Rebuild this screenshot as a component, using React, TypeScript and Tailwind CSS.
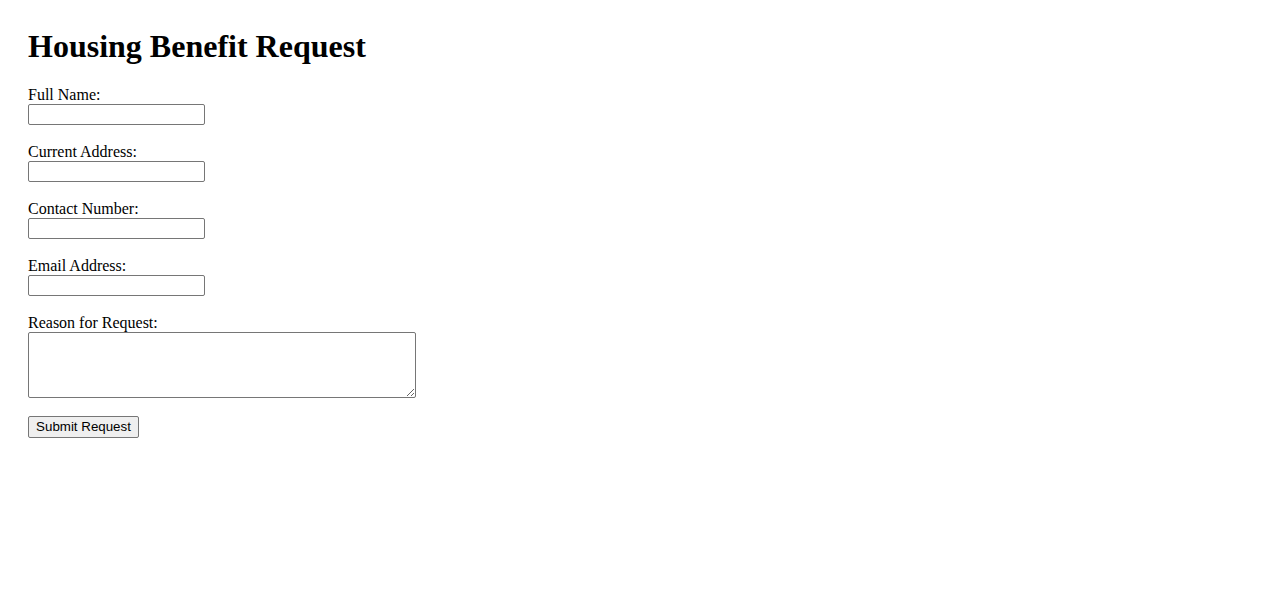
import { useState } from 'react';

const fields = [
  { id: 'fullName', label: 'Full Name:', type: 'text' },
  { id: 'address', label: 'Current Address:', type: 'text' },
  { id: 'phone', label: 'Contact Number:', type: 'tel' },
  { id: 'email', label: 'Email Address:', type: 'email' },
];

function App() {
  const [values, setValues] = useState<Record<string, string>>({});

  return (
    <div className="min-h-screen bg-white pl-[28px] pt-[28px] text-black font-['Liberation_Serif',serif]">
      <h1 className="text-[32px] font-bold leading-[37px] mb-[20px]">Housing Benefit Request</h1>
      <form className="flex flex-col items-start" onSubmit={(e) => e.preventDefault()}>
        {fields.map((f) => (
          <div key={f.id} className="flex flex-col items-start mb-[17px]">
            <label htmlFor={f.id} className="text-[16px] leading-[19px] h-[19px]">
              {f.label}
            </label>
            <input
              id={f.id}
              type={f.type}
              value={values[f.id] ?? ''}
              onChange={(e) => setValues({ ...values, [f.id]: e.target.value })}
              className="w-[177px] h-[21px] border border-[#767676] rounded-[2px] px-[2px] text-[13.33px] font-['Liberation_Sans',sans-serif] bg-white"
            />
          </div>
        ))}
        <div className="flex flex-col items-start mb-[18px]">
          <label htmlFor="reason" className="text-[16px] leading-[19px] h-[19px]">
            Reason for Request:
          </label>
          <textarea
            id="reason"
            className="block w-[388px] h-[66px] border border-[#767676] rounded-[2px] px-[2px] text-[13.33px] font-['Liberation_Mono',monospace] bg-white"
          />
        </div>
        <button
          type="submit"
          className="h-[22px] w-[111px] border border-[#767676] rounded-[2px] bg-[#efefef] text-[13.33px] leading-[16px] font-['Liberation_Sans',sans-serif] text-black"
        >
          Submit Request
        </button>
      </form>
    </div>
  );
}

export default App;
